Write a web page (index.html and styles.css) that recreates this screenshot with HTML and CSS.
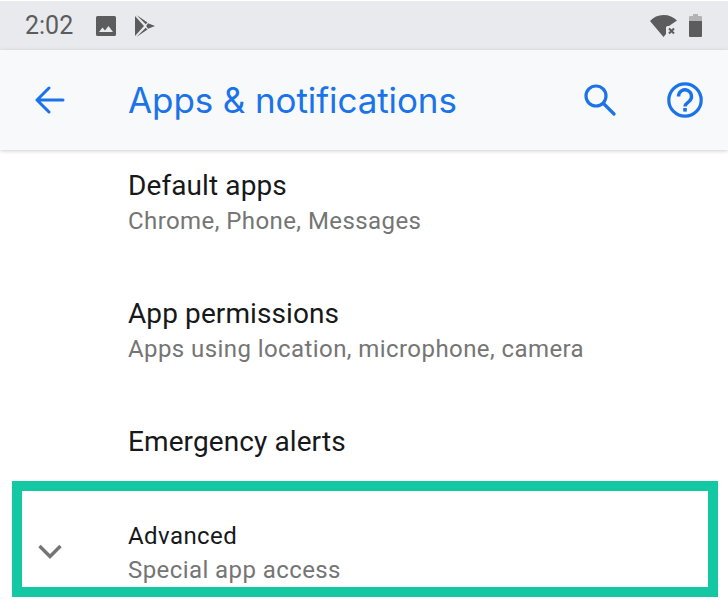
FILE: index.html
```html
<!DOCTYPE html>
<html lang="en">
<head>
    <meta charset="UTF-8">
    <title>Apps &amp; notifications</title>
    <link rel="stylesheet" href="styles.css">
</head>
<body>

    <!-- Status bar -->
    <div class="status-bar">
        <span class="clock">2:02</span>
        <svg class="st-icon" width="20" height="20" viewBox="0 0 20 20"><path fill="#5c5c5e" d="M1.500 0h17A1.500 1.500 0 0 1 20 1.500v17a1.500 1.500 0 0 1-1.500 1.500h-17A1.500 1.500 0 0 1 0 18.500v-17A1.500 1.500 0 0 1 1.500 0zM3 16h14l-4.500-6-3.500 4.500L6.500 11.500z"/></svg>
        <svg class="st-icon play" width="20" height="22" viewBox="0 0 20 22"><path fill="#5c5c5e" d="M0 1v20l9-10zM1.500 0l11 7.500-1.800 1.800zM1.500 22l9.200-9.300 1.800 1.800zM13 8.300l7 2.700-7 2.700-1.800-2.700z"/></svg>
        <span class="spacer"></span>
        <svg class="st-icon wifi" width="27" height="22" viewBox="0 0 27 22"><path fill="#5c5c5e" d="M0 6C3.500 2 8 0 13.500 0S23.500 2 27 5.500L19 11h-1.500a1.500 1.500 0 0 0-1.500 1.500V19l-2.500 3z"/><path stroke="#5c5c5e" stroke-width="2" fill="none" d="M19 13.500l5 5M24 13.500l-5 5"/></svg>
        <svg class="st-icon battery" width="13" height="23" viewBox="0 0 13 23"><path fill="#b3b3b5" d="M4 0h5v2h3a1 1 0 0 1 1 1v4H0V3a1 1 0 0 1 1-1h3z"/><path fill="#5c5c5e" d="M0 7h13v15a1 1 0 0 1-1 1H1a1 1 0 0 1-1-1z"/></svg>
    </div>

    <!-- App bar -->
    <div class="app-bar">
        <svg class="back" width="30" height="28" viewBox="0 0 30 28"><path fill="none" stroke="#1a73e8" stroke-width="3" stroke-linecap="round" stroke-linejoin="round" d="M28 14H2M14 2L2 14l12 12"/></svg>
        <h1>Apps &amp; notifications</h1>
        <svg class="search" width="32" height="32" viewBox="0 0 32 32"><circle cx="12" cy="12" r="10" fill="none" stroke="#1a73e8" stroke-width="3.200"/><path stroke="#1a73e8" stroke-width="3.200" stroke-linecap="round" d="M19.500 19.500L30 30"/></svg>
        <svg class="help" width="36" height="36" viewBox="0 0 36 36"><circle cx="18" cy="18" r="16.200" fill="none" stroke="#1a73e8" stroke-width="3.200"/><path fill="none" stroke="#1a73e8" stroke-width="3.400" d="M11.500 14.500a6.500 6.500 0 1 1 10.500 5c-2.500 2-4 2.500-4 5"/><rect x="16.200" y="26" width="3.600" height="3.600" fill="#1a73e8"/></svg>
    </div>

    <!-- Settings list -->
    <div class="list">
        <div class="item">
            <div class="item-title">Default apps</div>
            <div class="item-sub">Chrome, Phone, Messages</div>
        </div>
        <div class="item">
            <div class="item-title">App permissions</div>
            <div class="item-sub">Apps using location, microphone, camera</div>
        </div>
        <div class="item single">
            <div class="item-title">Emergency alerts</div>
        </div>
        <div class="advanced">
            <svg class="chevron" width="24" height="15" viewBox="0 0 24 15"><path fill="none" stroke="#757575" stroke-width="3.400" d="M1.500 2l10.500 10.500L22.500 2"/></svg>
            <div>
                <div class="adv-title">Advanced</div>
                <div class="item-sub">Special app access</div>
            </div>
        </div>
    </div>

</body>
</html>
```

FILE: styles.css
```css
html, body { margin: 0; height: 600px; overflow: hidden; background: #fff; }
body { font-family: Roboto, sans-serif; }

.status-bar { height: 49px; margin-top: 1px; background: #e8eaed; display: flex; align-items: center; padding: 0 26px 0 25px; }
.clock { font-size: 25px; color: #5c5c5e; width: 71px; }
.st-icon { display: block; margin-right: 19px; }
.st-icon.play { margin-right: 0; }
.st-icon.wifi { margin-right: 12px; }
.st-icon.battery { margin-right: 0; }
.spacer { flex: 1; }

.app-bar { height: 100px; background: #f8f9fb; display: flex; align-items: center; box-shadow: 0 1px 4px rgba(0,0,0,0.2); position: relative; padding: 0 25px 0 35px; }
.back { margin-right: 63px; }
.app-bar h1 { flex: 1; margin: 0; font-size: 35px; font-weight: 400; color: #1a73e8; font-family: Inter, sans-serif; letter-spacing: -0.1px; }
.search { margin-right: 51px; }

.item { height: 128px; padding: 18px 0 0 128px; box-sizing: border-box; }
.item.single { height: 75px; }
.item-title { font-size: 28px; line-height: 36px; letter-spacing: 0.1px; color: #17181a; }
.item-sub { font-size: 24px; line-height: 34px; letter-spacing: 0.42px; color: #757575; }

.advanced { margin: 0 10px 0 12px; height: 116px; box-sizing: border-box; border: 10px solid #14c8a4; display: flex; align-items: flex-end; }
.chevron { margin: 0 66px 28px 16px; }
.adv-title { font-size: 24px; line-height: 34px; letter-spacing: 0.42px; color: #17181a; }
```
